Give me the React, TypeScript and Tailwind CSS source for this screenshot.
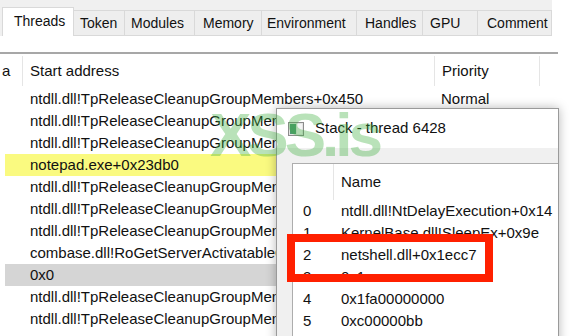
const tabs = [
  { label: "Threads", cls: "w-[72px] pl-[11px]", active: true },
  { label: "Token", cls: "w-[51px] pl-[6px]" },
  { label: "Modules", cls: "w-[70px] pl-[6px]" },
  { label: "Memory", cls: "w-[67px] pl-[8px]" },
  { label: "Environment", cls: "w-[95px] pl-[5px]" },
  { label: "Handles", cls: "w-[66px] pl-[8px]" },
  { label: "GPU", cls: "w-[55px] pl-[7px]" },
  { label: "Comment", cls: "w-[74px] pl-[9px]" },
];

type Row = { text: string; priority?: string; tone?: "yellow" | "gray" };

const threadRows: Row[] = [
  { text: "ntdll.dll!TpReleaseCleanupGroupMembers+0x450", priority: "Normal" },
  { text: "ntdll.dll!TpReleaseCleanupGroupMembers+0x450" },
  { text: "ntdll.dll!TpReleaseCleanupGroupMembers+0x450" },
  { text: "notepad.exe+0x23db0", tone: "yellow" },
  { text: "ntdll.dll!TpReleaseCleanupGroupMembers+0x450" },
  { text: "ntdll.dll!TpReleaseCleanupGroupMembers+0x450" },
  { text: "ntdll.dll!TpReleaseCleanupGroupMembers+0x450" },
  { text: "combase.dll!RoGetServerActivatableClasses+0x2d4" },
  { text: "0x0", tone: "gray" },
  { text: "ntdll.dll!TpReleaseCleanupGroupMembers+0x450" },
  { text: "ntdll.dll!TpReleaseCleanupGroupMembers+0x450" },
];

const frames = [
  "ntdll.dll!NtDelayExecution+0x14",
  "KernelBase.dll!SleepEx+0x9e",
  "netshell.dll+0x1ecc7",
  "0x1c",
  "0x1fa00000000",
  "0xc00000bb",
];

function WindowIcon() {
  return (
    <svg width="16" height="14" viewBox="0 0 16 14">
      <rect x="0.5" y="0.5" width="15" height="13" fill="#e4e4e4" stroke="#8c8c8c" />
      <rect x="2" y="2" width="6" height="10" fill="#4f9a72" />
      <rect x="9" y="2" width="5" height="10" fill="#f4f4f4" />
    </svg>
  );
}

export default function App() {
  return (
    <div className="relative w-[581px] h-[336px] overflow-hidden bg-white font-['Liberation_Sans',Arial,sans-serif] text-[#111]">
      {/* ── Main window ─────────────────────────────────────────── */}
      <div className="w-[558px] flex flex-col">
        <div className="w-[552px] h-[36px] bg-[#f0f0f0] flex items-end pl-[2px]">
          {tabs.map((t) =>
            t.active ? (
              <div
                key={t.label}
                className={`${t.cls} h-[29px] bg-white border border-b-0 border-[#d9d9d9] flex items-center text-[14px] pb-[2px]`}
              >
                {t.label}
              </div>
            ) : (
              <div
                key={t.label}
                className={`${t.cls} h-[26px] bg-[#eeeeee] border border-l-0 border-[#d9d9d9] flex items-center text-[14px]`}
              >
                {t.label}
              </div>
            )
          )}
        </div>
        <div className="h-[16px]" />

        <div className="border-t-2 border-[#a7a7a7] h-[36px] flex text-[15px]">
          <div className="w-[22px] flex items-center pl-[2px]">a</div>
          <div className="w-px bg-[#e5e5e5] my-[2px]" />
          <div className="w-[411px] flex items-center pl-[7px]">Start address</div>
          <div className="w-px bg-[#e5e5e5] my-[2px]" />
          <div className="w-[104px] flex items-center pl-[7px]">Priority</div>
          <div className="w-px bg-[#e5e5e5] my-[2px]" />
        </div>

        {threadRows.map((r, i) => (
          <div
            key={i}
            className={`h-[22px] ml-[5px] flex items-center text-[15px] whitespace-nowrap ${
              r.tone === "yellow" ? "bg-[#fafa80]" : r.tone === "gray" ? "bg-[#d5d5d5]" : ""
            }`}
          >
            {/* rows under the stack window are clipped at its left edge */}
            <div className={`${i === 0 ? "w-[429px]" : "w-[271px]"} pl-[25px] overflow-hidden`}>{r.text}</div>
            {r.priority && <div className="pl-[7px]">{r.priority}</div>}
          </div>
        ))}
      </div>

      {/* ── Stack window ────────────────────────────────────────── */}
      <div className="absolute left-[276px] top-[108px] w-[283px] h-[240px] bg-white border border-[#9a9a9a] shadow-[0_0_10px_rgba(0,0,0,0.28)] flex flex-col">
        <div className="h-[39px] flex items-center pl-[11px] gap-[11px] text-[15px]">
          <WindowIcon />
          <span>Stack - thread 6428</span>
        </div>
        <div className="flex-1 bg-[#f0f0f0] pt-[15px] pl-[15px]">
          <div className="h-full bg-white border-t border-l border-[#adadad] text-[15px]">
            <div className="h-[36px] flex">
              <div className="w-[40px]" />
              <div className="w-px bg-[#e5e5e5]" />
              <div className="flex items-center pl-[7px]">Name</div>
            </div>
            {frames.map((f, i) => (
              <div key={i} className="h-[22px] flex items-center whitespace-nowrap">
                <div className="w-[41px] pl-[10px]">{i}</div>
                <div className="pl-[7px]">{f}</div>
              </div>
            ))}
          </div>
        </div>
      </div>

      {/* ── Annotation box and watermark ────────────────────────── */}
      <div className="absolute left-[287px] top-[234px] w-[206px] h-[48px] border-[8px] border-[#ff2000]" />
      <div className="absolute left-[210px] top-[104px] text-[62px] leading-[62px] font-bold tracking-[-4px] text-[rgba(60,175,60,0.36)] select-none">
        XSS.is
      </div>
    </div>
  );
}
